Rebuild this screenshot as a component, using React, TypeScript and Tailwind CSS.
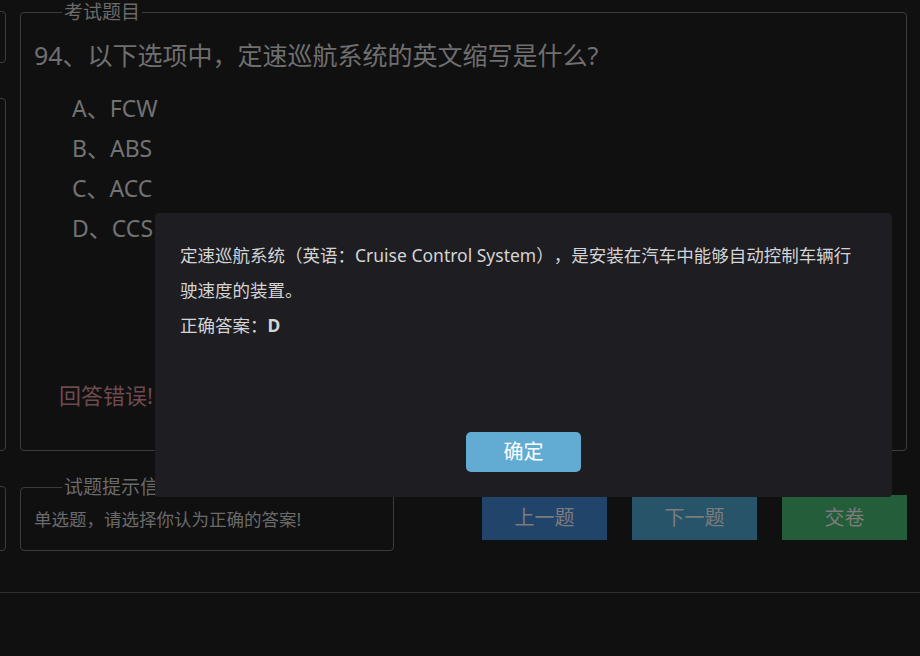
const options = ["A、FCW", "B、ABS", "C、ACC", "D、CCS"];

const font = "font-['Noto_Sans','Noto_Sans_CJK_SC',sans-serif]";

function SideBoxes() {
  return (
    <div className="-ml-[94px] flex w-[100px] shrink-0 flex-col">
      <div className="mt-[11px] h-[52px] rounded-[4px] border border-[#3c3c3c]" />
      <div className="mt-[35px] h-[353px] rounded-[4px] border border-[#3c3c3c]" />
      <div className="mt-[35px] h-[65px] rounded-[4px] border border-[#3c3c3c]" />
    </div>
  );
}

function NavButton({ label, color }: { label: string; color: string }) {
  return (
    <button className={`h-[45px] w-[125px] text-[20px] text-[#7c7c7c] ${color}`}>{label}</button>
  );
}

export default function App() {
  return (
    <div className={`relative h-[656px] w-[920px] overflow-hidden bg-[#101011] [text-spacing-trim:space-all] ${font}`}>
      <div className="flex">
        <SideBoxes />
        <div className="ml-[14px] flex w-[887px] flex-col">
          <fieldset className="h-[451px] rounded-[4px] border border-[#3c3c3c] px-[13px]">
            <legend className="ml-[28px] px-[2px] text-[19px] leading-[24px] text-[#6a6a6a]">考试题目</legend>
            <p className="mt-[13px] text-[25px] leading-[36px] text-[#6f6f6f]">
              94、以下选项中，定速巡航系统的英文缩写是什么?
            </p>
            <ul className="mt-[15px] pl-[38px]">
              {options.map((o) => (
                <li key={o} className="text-[23px] leading-[40px] text-[#727272]">
                  {o}
                </li>
              ))}
            </ul>
            <p className="mt-[131px] pl-[25px] text-[22px] leading-[32px] text-[#6e4a4f]">回答错误!</p>
          </fieldset>
          <div className="mt-[24px] flex items-start">
            <fieldset className="h-[76px] w-[374px] rounded-[4px] border border-[#3c3c3c] px-[13px]">
              <legend className="ml-[28px] px-[2px] text-[19px] leading-[24px] text-[#6a6a6a]">试题提示信息</legend>
              <p className="mt-[7px] text-[17.5px] leading-[26px] text-[#6a6a6a]">单选题，请选择你认为正确的答案!</p>
            </fieldset>
            <div className="mt-[20px] ml-[88px] flex gap-[25px]">
              <NavButton label="上一题" color="bg-[#21446a]" />
              <NavButton label="下一题" color="bg-[#285469]" />
              <NavButton label="交卷" color="bg-[#235d39]" />
            </div>
          </div>
        </div>
      </div>
      <div className="mt-[41px] h-px bg-[#2e2e2e]" />

      <div className="absolute left-[155px] top-[213px] flex h-[284px] w-[737px] flex-col rounded-[4px] bg-[#1e1d22] px-[25px] pt-[25px] pb-[25px]">
        <div className="text-[17.5px] leading-[35px] text-[#d4d4d4]">
          <p>定速巡航系统（英语：Cruise Control System），是安装在汽车中能够自动控制车辆行驶速度的装置。</p>
          <p>
            正确答案：<b className="font-bold">D</b>
          </p>
        </div>
        <div className="mt-auto flex justify-center">
          <button className="h-[40px] w-[115px] rounded-[5px] bg-[#62acd4] text-[20px] text-white">确定</button>
        </div>
      </div>
    </div>
  );
}
